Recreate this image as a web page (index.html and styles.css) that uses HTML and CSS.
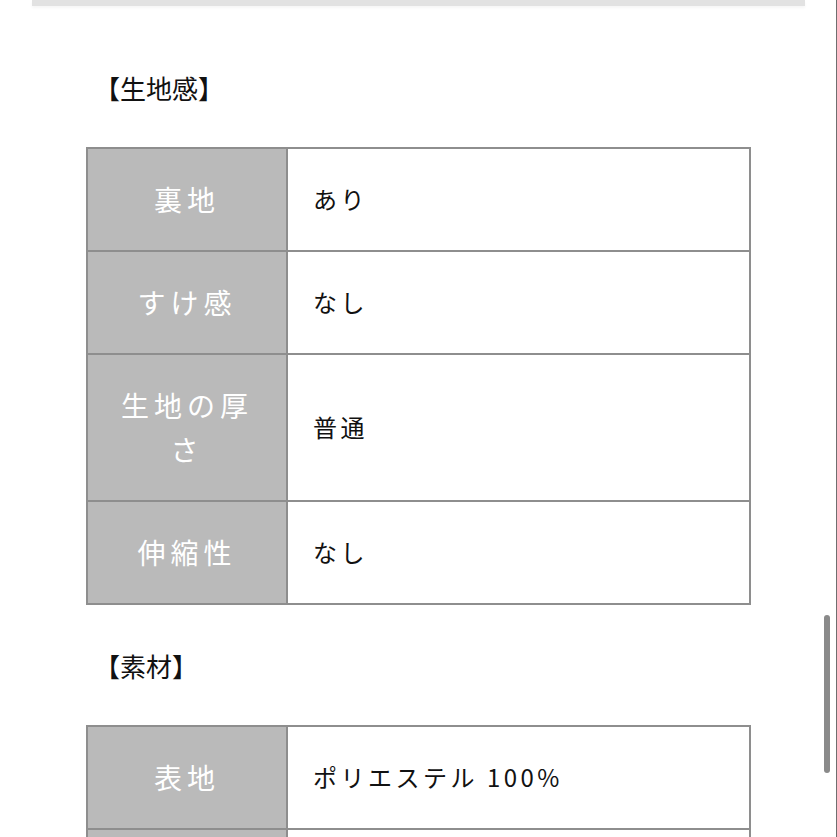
FILE: index.html
```html
<!DOCTYPE html>
<html lang="ja">
<head>
<meta charset="utf-8">
<link rel="stylesheet" href="styles.css">
</head>
<body>
<div class="topbar"></div>
<main class="content">
  <section class="section first">
    <h2 class="section-title">【生地感】</h2>
    <table class="spec">
      <tr><th>裏地</th><td>あり</td></tr>
      <tr><th>すけ感</th><td>なし</td></tr>
      <tr><th>生地の厚さ</th><td>普通</td></tr>
      <tr><th>伸縮性</th><td>なし</td></tr>
    </table>
  </section>
  <section class="section">
    <h2 class="section-title">【素材】</h2>
    <table class="spec">
      <tr><th>表地</th><td>ポリエステル 100%</td></tr>
      <tr><th>&nbsp;</th><td>&nbsp;</td></tr>
    </table>
  </section>
</main>
<div class="scroll-edge"></div>
<div class="scroll-thumb"></div>
</body>
</html>
```
FILE: styles.css
```css
html, body {
  margin: 0;
  padding: 0;
  background: #ffffff;
  height: 837px;
  overflow: hidden;
}
body {
  font-family: "Noto Sans CJK JP", "Noto Sans", sans-serif;
  color: #111;
}
.topbar {
  margin: 0 32px;
  height: 6px;
  background: #e2e2e2;
  box-shadow: 0 2px 3px rgba(0,0,0,0.04);
}
.content {
  padding: 0 86px;
}
.section-title {
  margin: 43px 0 41px;
  padding-left: 8px;
  font-size: 26px;
  font-weight: normal;
  line-height: 36px;
  letter-spacing: 0;
  color: #111;
}
.section.first .section-title {
  margin-top: 64px;
}
.spec {
  width: 100%;
  border-collapse: collapse;
  table-layout: fixed;
}
.spec th, .spec td {
  border: 2px solid #8e8e8e;
  padding: 28px 0 29px;
  line-height: 44px;
  vertical-align: middle;
}
.spec th {
  box-sizing: border-box;
  width: 200px;
  padding-left: 24px;
  padding-right: 24px;
  background: #bababa;
  color: #ffffff;
  font-weight: normal;
  font-size: 28px;
  letter-spacing: 5px;
  text-align: center;
}
.spec td {
  padding-left: 25px;
  font-size: 24px;
  letter-spacing: 3.5px;
  color: #111;
  text-align: left;
}
.scroll-edge {
  position: fixed;
  top: 0;
  right: 0;
  width: 1px;
  height: 837px;
  background: #6f6f6f;
}
.scroll-thumb {
  position: fixed;
  top: 615px;
  left: 824px;
  width: 6px;
  height: 158px;
  border-radius: 3px;
  background: #8a8a8a;
}
```
